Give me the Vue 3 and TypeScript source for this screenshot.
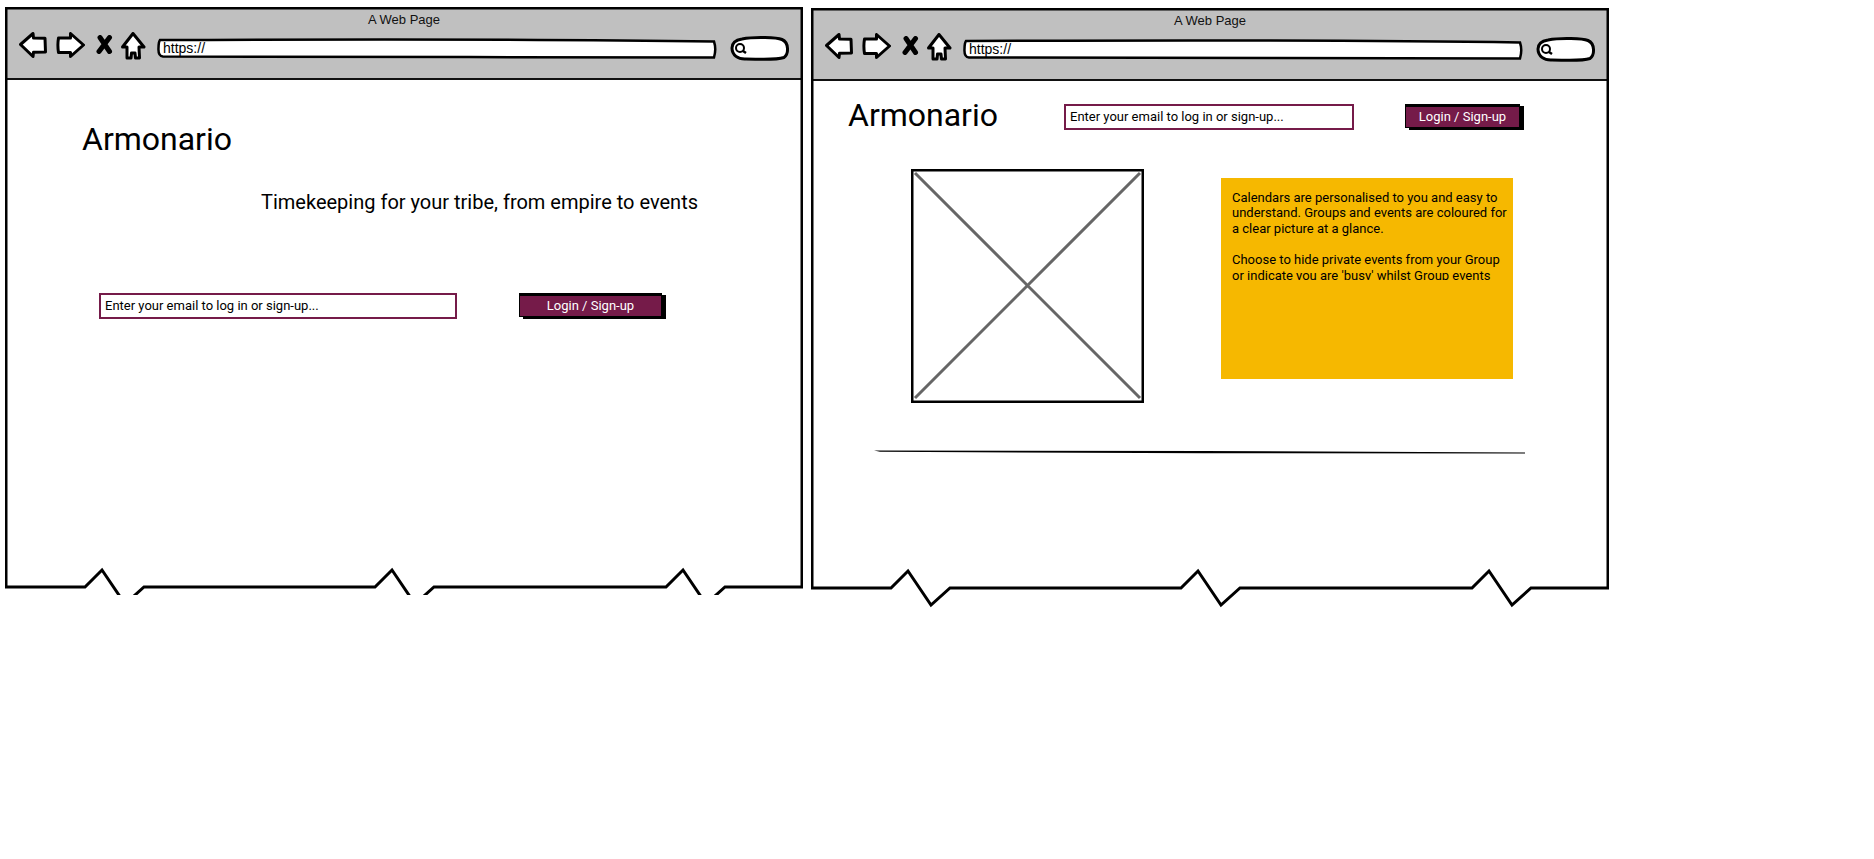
<script setup lang="ts">
// tooth offsets along the bottom edge of each wireframe window
const teeth = [80, 370, 661];

function outline(bottom: number): string {
  const steps = teeth
    .map((x) => `L${x},${bottom} L${x + 17},${bottom - 17} L${x + 40},${bottom + 17} L${x + 59},${bottom}`)
    .join(' ');
  return `M797,${bottom} L797,1 L1,1 L1,${bottom} ${steps} Z`;
}

const pages = [
  { id: 'landing', edge: 580 },
  { id: 'details', edge: 580 },
];
</script>

<template>
  <div class="board">
    <section v-for="page in pages" :key="page.id" class="window" :class="page.id">
      <header class="chrome">
        <div class="title">A Web Page</div>
        <div class="toolbar">
          <svg class="icon back" width="28" height="26" viewBox="0 0 28 26">
            <path d="M1.5,12.5 L14,1.5 L14.5,6 L26,6.3 L26.5,20 L14.5,20.3 L14,24.5 Z" />
          </svg>
          <svg class="icon forward" width="29" height="26" viewBox="0 0 29 26">
            <path d="M27.5,13 L14.5,1.5 L14.5,6 L2.5,6 Q1.3,13 2.5,20.5 L14.5,20.5 L14.5,24.5 Z" />
          </svg>
          <svg class="icon stop" width="18" height="19" viewBox="0 0 18 19">
            <path d="M5,2.5 L14.5,16.5 M14.5,2.5 L4,16.5" />
          </svg>
          <svg class="icon home" width="25" height="28" viewBox="0 0 25 28">
            <path d="M12,1.5 L23,15 L18,15 L18.5,26 L14.5,26 L14,21 L10.5,21 L10,26 L6,26 L6,15 L1.5,15 Z" />
          </svg>
          <div class="url">
            <svg width="562" height="22" viewBox="0 0 562 22">
              <path d="M3,2 C120,1.5 400,1 557,3.5 Q559.5,11 557,19.5 C400,19 120,19 6,18.5 Q1,18 1.5,10 Q1.5,4 3,2 Z" />
            </svg>
            <span>https://</span>
          </div>
          <svg class="icon search" width="60" height="26" viewBox="0 0 60 26">
            <path d="M12,3 C25,0.5 47,1.5 52,3.5 C59,6.5 59,18 54,21.5 C45,24.5 28,23 16,23 C8,23.5 2,19 2,12 C2,7 6,4 12,3 Z" />
            <circle cx="10" cy="12" r="4" />
            <path class="handle" d="M13,15 L16,17" />
          </svg>
        </div>
      </header>

      <div v-if="page.id === 'landing'" class="body landing-body">
        <h1 class="brand">Armonario</h1>
        <p class="tagline">Timekeeping for your tribe, from empire to events</p>
        <div class="signup">
          <div class="email">Enter your email to log in or sign-up...</div>
          <button class="login">Login / Sign-up</button>
        </div>
      </div>

      <div v-else class="body details-body">
        <div class="top">
          <h1 class="brand">Armonario</h1>
          <div class="email">Enter your email to log in or sign-up...</div>
          <button class="login">Login / Sign-up</button>
        </div>
        <div class="feature">
          <svg class="placeholder" width="233" height="234" viewBox="0 0 233 234">
            <rect x="1.25" y="1.25" width="230.5" height="231.5" />
            <path d="M4,4 L229,229 M229,4 L4,229" />
          </svg>
          <div class="note">
            <div class="note-text">
              <p>Calendars are personalised to you and easy to understand. Groups and events are coloured for a clear picture at a glance.</p>
              <p>Choose to hide private events from your Group or indicate you are 'busy' whilst Group events</p>
            </div>
          </div>
        </div>
        <svg class="rule" width="651" height="4" viewBox="0 0 651 4">
          <path d="M0,0.5 L330,1 L651,2.6 L651,3.4 L330,3.2 L6,1.8 Z" />
        </svg>
      </div>

      <svg class="frame" width="798" height="610" viewBox="0 0 798 610">
        <path :d="outline(page.edge)" />
      </svg>
    </section>
  </div>
</template>

<style scoped>
.board {
  display: flex;
  gap: 8px;
  padding: 7px 0 0 5px;
  font-family: Roboto, "Liberation Sans", sans-serif;
  color: #000;
}

.window {
  position: relative;
  flex: none;
  width: 798px;
  height: 588px;
  overflow: hidden;
  background: #fff;
}

.window.details {
  height: 610px;
  margin-top: 1px;
}

.chrome {
  height: 73px;
  box-sizing: border-box;
  background: #c0c0c0;
  border-bottom: 2px solid #111;
}

.title {
  padding-top: 5px;
  font: 13px/15px "Liberation Sans", Arial, sans-serif;
  text-align: center;
  color: #111;
}

.toolbar {
  display: flex;
  align-items: center;
  padding: 3px 0 0 14px;
}

.icon path,
.icon circle {
  fill: #fff;
  stroke: #000;
  stroke-width: 3;
  stroke-linejoin: round;
}

.back {
  margin: -2px 9px 0 0;
}

.forward {
  margin: -2px 10px 0 0;
}

.stop {
  margin: -4px 8px 0 0;
}

.stop path {
  fill: none;
  stroke-width: 5;
  stroke-linecap: round;
}

.home {
  margin-right: 11px;
}

.search {
  margin: 6px 0 0 11px;
}

.search circle {
  fill: none;
  stroke-width: 2;
}

.search .handle {
  stroke-width: 2.5;
}

.url {
  position: relative;
  width: 562px;
  height: 22px;
  margin-top: 6px;
}

.url svg {
  display: block;
}

.url path {
  fill: #fff;
  stroke: #000;
  stroke-width: 2.5;
}

.url span {
  position: absolute;
  left: 6px;
  top: 2px;
  font: 14px/16px "Liberation Sans", Arial, sans-serif;
}

.brand {
  margin: 0 0 0 -1px;
  font-size: 32px;
  font-weight: 400;
  line-height: 38px;
}

.landing-body {
  padding: 40px 0 0 78px;
}

.tagline {
  margin: 32px 0 0 178px;
  font-size: 20px;
  line-height: 24px;
}

.signup {
  display: flex;
  align-items: center;
  gap: 62px;
  margin: 77px 0 0 16px;
}

.email {
  box-sizing: border-box;
  width: 358px;
  height: 26px;
  margin-top: 2px;
  padding-left: 4px;
  border: 2px solid #751b49;
  background: #fff;
  font-size: 13px;
  line-height: 22px;
}

.login {
  box-sizing: border-box;
  width: 143px;
  height: 24px;
  padding: 0;
  border: solid #000;
  border-width: 3px 1px 1px;
  background: #751b49;
  box-shadow: 4px 2px 0 #000;
  font-family: inherit;
  font-size: 13px;
  line-height: 18px;
  color: #fff;
}

.top {
  display: flex;
  align-items: center;
  padding: 16px 0 0 38px;
}

.details-body .brand {
  width: 216px;
  margin-top: -1px;
}

.details-body .email {
  width: 290px;
}

.details-body .login {
  width: 115px;
  margin-left: 51px;
}

.feature {
  display: flex;
  align-items: flex-start;
  margin: 35px 0 0 100px;
}

.placeholder {
  display: block;
}

.placeholder rect {
  fill: #fff;
  stroke: #000;
  stroke-width: 2.5;
}

.placeholder path {
  stroke: #666;
  stroke-width: 3;
}

.note {
  box-sizing: border-box;
  width: 292px;
  height: 201px;
  margin: 9px 0 0 77px;
  padding: 12px 5px 0 11px;
  background: #f6b800;
}

.note-text {
  height: 90px;
  overflow: hidden;
  font-size: 13px;
  line-height: 15.4px;
}

.note-text p {
  margin: 0 0 16px;
}

.rule {
  display: block;
  margin: 47px 0 0 63px;
}

.rule path {
  fill: #000;
}

.frame {
  position: absolute;
  left: 0;
  top: 0;
  pointer-events: none;
}

.frame path {
  fill: none;
  stroke: #000;
  stroke-width: 3;
}
</style>
